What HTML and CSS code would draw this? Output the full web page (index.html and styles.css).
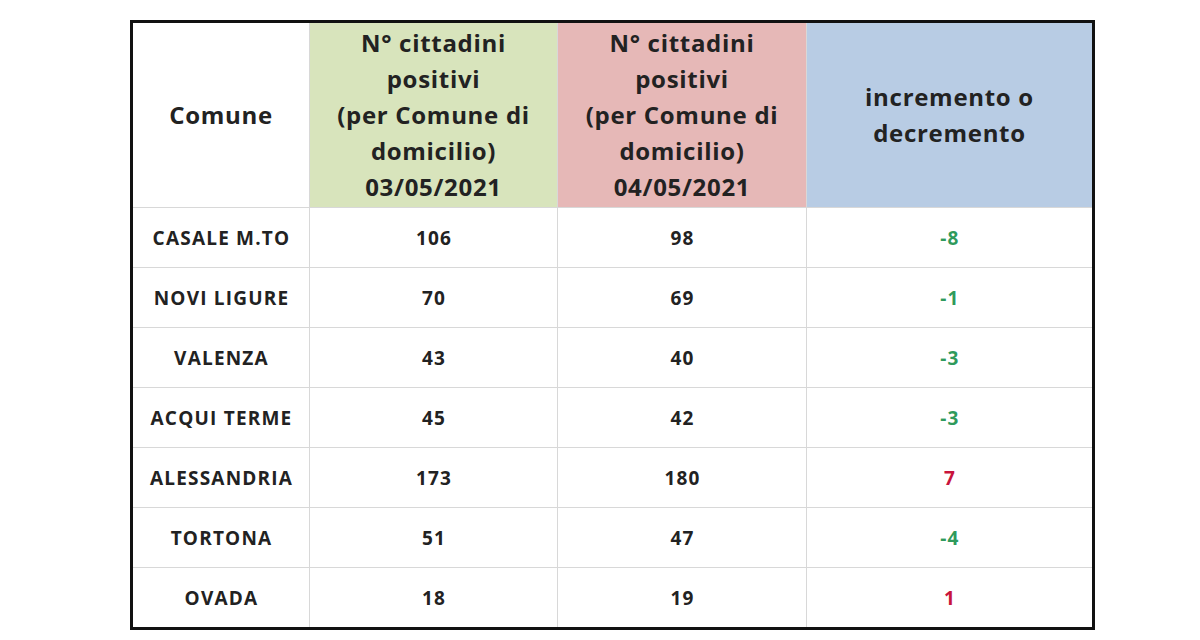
FILE: index.html
```html
<!DOCTYPE html>
<html lang="it">
<head>
<meta charset="utf-8">
<link rel="stylesheet" href="styles.css">
</head>
<body>
<div class="page">
<table class="grid">
  <colgroup>
    <col class="c1"><col class="c2"><col class="c3"><col class="c4">
  </colgroup>
  <thead>
    <tr>
      <th class="h-comune">Comune</th>
      <th class="h-green">N° cittadini<br>positivi<br>(per Comune di<br>domicilio)<br>03/05/2021</th>
      <th class="h-pink">N° cittadini<br>positivi<br>(per Comune di<br>domicilio)<br>04/05/2021</th>
      <th class="h-blue">incremento o<br>decremento</th>
    </tr>
  </thead>
  <tbody>
    <tr><td class="name">CASALE M.TO</td><td>106</td><td>98</td><td class="neg">-8</td></tr>
    <tr><td class="name">NOVI LIGURE</td><td>70</td><td>69</td><td class="neg">-1</td></tr>
    <tr><td class="name">VALENZA</td><td>43</td><td>40</td><td class="neg">-3</td></tr>
    <tr><td class="name">ACQUI TERME</td><td>45</td><td>42</td><td class="neg">-3</td></tr>
    <tr><td class="name">ALESSANDRIA</td><td>173</td><td>180</td><td class="pos">7</td></tr>
    <tr><td class="name">TORTONA</td><td>51</td><td>47</td><td class="neg">-4</td></tr>
    <tr><td class="name">OVADA</td><td>18</td><td>19</td><td class="pos">1</td></tr>
  </tbody>
</table>
</div>
</body>
</html>
```
FILE: styles.css
```css
html, body {
  margin: 0;
  padding: 0;
  background: #ffffff;
}
.page {
  width: 1200px;
  height: 640px;
  padding: 20px 0 0 130px;
  box-sizing: border-box;
}
.grid {
  border-collapse: collapse;
  border: 3px solid #111111;
  width: 962px;
  table-layout: fixed;
  font-family: "Open Sans", "Liberation Sans", sans-serif;
  color: #222222;
}
.c1 { width: 178px; }
.c2 { width: 248px; }
.c3 { width: 249px; }
.c4 { width: 287px; }
.grid th, .grid td {
  border: 1px solid #d8d8d8;
  text-align: center;
  vertical-align: middle;
  padding: 0;
}
.grid th {
  height: 184px;
  font-size: 24px;
  line-height: 36px;
  font-weight: 700;
  letter-spacing: 0.7px;
}
.h-comune { background: #ffffff; }
.h-green { background: #d8e4bc; }
.h-pink { background: #e6b8b7; }
.h-blue { background: #b8cce4; }
.grid td {
  height: 59px;
  font-size: 19px;
  font-weight: 700;
  letter-spacing: 1.2px;
  text-indent: 1px;
}
.neg { color: #2f9a5c; }
.pos { color: #c8143c; }
```
